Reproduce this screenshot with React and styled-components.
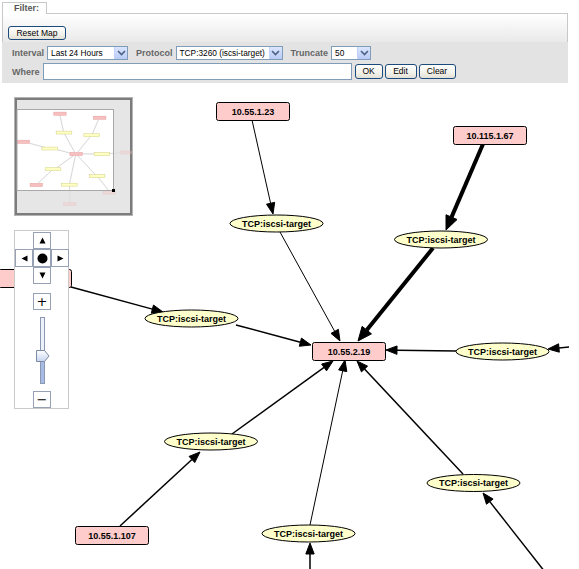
import React from 'react'
import styled, { createGlobalStyle } from 'styled-components'

const GlobalStyle = createGlobalStyle`
  body {
    margin: 0;
    background: #fff;
    font-family: "Liberation Sans", Arial, sans-serif;
  }
`

// graph data, in page coordinates; off = only visible in the overview
const hosts = [
  { label: '10.55.1.23', x: 216, y: 102 },
  { label: '10.115.1.67', x: 453, y: 126 },
  { label: '10.55.2.19', x: 312, y: 342 },
  { label: '10.55.1.107', x: 75, y: 526 },
  { label: '10.55.1.31', x: -2, y: 269 },
  { label: '10.55.1.44', x: 614, y: 333, off: true },
  { label: '10.55.1.58', x: 508, y: 572, off: true },
  { label: '10.55.1.62', x: 275, y: 640, off: true },
]

const services = [
  { x: 276.5, y: 223.5 },
  { x: 441, y: 239.5 },
  { x: 191.5, y: 318.5 },
  { x: 502.5, y: 351.5 },
  { x: 211, y: 441.5 },
  { x: 308.5, y: 533.5 },
  { x: 473.5, y: 483 },
]

const edges = [
  { from: [252, 120], to: [273, 214], w: 1 },
  { from: [280, 232], to: [340, 341], w: 1 },
  { from: [483, 144], to: [446, 230], w: 4 },
  { from: [433, 248], to: [358, 341], w: 4 },
  { from: [71, 287], to: [163, 312], w: 1.5 },
  { from: [236, 325], to: [311, 345], w: 1.5 },
  { from: [456, 351], to: [386, 350], w: 1.5 },
  { from: [614, 343], to: [548, 349], w: 1.5 },
  { from: [120, 526], to: [200, 452], w: 1.5 },
  { from: [232, 434], to: [333, 361], w: 1.5 },
  { from: [310, 525], to: [345, 360], w: 1 },
  { from: [310, 640], to: [310, 543], w: 1.5 },
  { from: [463, 474], to: [357, 361], w: 1.5 },
  { from: [545, 572], to: [483, 493], w: 1.5 },
]

const NODE_W = 73
const NODE_H = 18

const Page = styled.div`
  width: 579px;
`

const FilterBox = styled.div`
  width: 566px;
  padding: 2px 0 0 2px;
`

const Legend = styled.div`
  position: relative;
  z-index: 1;
  width: fit-content;
  box-sizing: border-box;
  height: 12px;
  margin-bottom: -1px;
  padding: 0 7px 0 11px;
  border: 1px solid #c8c8c8;
  border-bottom: none;
  background: #fff;
  color: #555;
  font-size: 9px;
  font-weight: bold;
  line-height: 11px;
`

const Panel = styled.div`
  box-sizing: border-box;
  height: 29px;
  padding: 12px 0 0 5px;
  border: 1px solid #c8c8c8;
  border-bottom: none;
  background: linear-gradient(#fff, #e9e9e9);
`

const Button = styled.button`
  display: block;
  box-sizing: border-box;
  height: ${(p) => p.$h || 15}px;
  width: ${(p) => p.$w}px;
  margin: 0 0 0 ${(p) => p.$ml || 0}px;
  padding: 0;
  border: 1px solid #1d4a7c;
  border-radius: 3px;
  background: linear-gradient(#fff, #f2f1ea 60%, #e3e1d6);
  color: #000;
  font-family: "Liberation Sans", Arial, sans-serif;
  font-size: 8.5px;
  line-height: 1;
`

const Controls = styled.div`
  box-sizing: border-box;
  height: 41px;
  padding: 4px 0 0 10px;
  background: #e3e3e3;
`

const Row = styled.div`
  display: flex;
  align-items: center;
  gap: 3px;
  height: ${(p) => p.$h}px;
  margin-bottom: 3px;
`

const Label = styled.span`
  margin-left: ${(p) => (p.$first ? 0 : 5)}px;
  color: #666;
  font-size: 9px;
  font-weight: bold;
`

const SelectBox = styled.div`
  display: flex;
  align-items: stretch;
  box-sizing: border-box;
  width: ${(p) => p.$w}px;
  height: 14px;
  border: 1px solid #7f9db9;
  background: #fff;
`

const SelectText = styled.span`
  flex: 1;
  padding-left: 3px;
  color: #000;
  font-size: 8.3px;
  line-height: 12px;
  white-space: nowrap;
  overflow: hidden;
`

const SelectArrow = styled.span`
  display: flex;
  align-items: center;
  justify-content: center;
  width: 12px;
  border-left: 1px solid #c3d3fd;
  background: linear-gradient(#dbe6fe, #b9cbf6);
`

const TextInput = styled.div`
  box-sizing: border-box;
  width: 309px;
  height: 17px;
  border: 1px solid #7f9db9;
  background: #fff;
`

const Canvas = styled.div`
  position: relative;
  height: 486px;
  overflow: hidden;
`

const GraphSvg = styled.svg`
  display: block;
`

const NodeText = styled.text`
  font-family: "Liberation Sans", Arial, sans-serif;
  font-size: 9px;
  font-weight: bold;
  fill: #000;
`

const Overview = styled.div`
  position: absolute;
  left: 14px;
  top: 14px;
  width: 119px;
  height: 119px;
  box-sizing: border-box;
  border: 1px solid #b4b4b4;
  background: #e6e6e6;
  box-shadow: inset 0 0 0 2px #7c7c7c;
`

const OverviewSvg = styled.svg`
  position: absolute;
  left: 0;
  top: 0;
`

const Nav = styled.div`
  position: absolute;
  left: 14px;
  top: 147px;
  width: 55px;
  height: 179px;
  box-sizing: border-box;
  border: 1px solid #cacaca;
  background: #fff;
`

const PanGrid = styled.div`
  display: grid;
  grid-template-columns: repeat(3, 18px);
  grid-template-rows: 17px 18px 17px;
  margin: 1px 0 0 0;
`

const NavButton = styled.div`
  grid-row: ${(p) => p.$row || 'auto'};
  grid-column: ${(p) => p.$col || 'auto'};
  display: flex;
  align-items: center;
  justify-content: center;
  box-sizing: border-box;
  width: 18px;
  height: ${(p) => p.$h || 17}px;
  border: 1px solid #97a1b5;
  background: #fff;
  color: #000;
  font-family: "DejaVu Sans", sans-serif;
  font-size: 13px;
  line-height: 1;
`

const ZoomColumn = styled.div`
  display: flex;
  flex-direction: column;
  align-items: center;
  width: 18px;
  margin: 9px 0 0 18px;
`

const Track = styled.div`
  position: relative;
  box-sizing: border-box;
  width: 5px;
  height: 67px;
  margin: 7px 0;
  border: 1px solid #8b98b2;
  background: linear-gradient(#edf1f9 0 36px, #a7bbe4 36px);
`

const Handle = styled.svg`
  position: absolute;
  left: -5px;
  top: 32px;
`

const Chevron = () => (
  <svg width="9" height="6" viewBox="0 0 9 6">
    <path d="M1 1 L4.5 4.5 L8 1" fill="none" stroke="#4d6185" strokeWidth="1.6" />
  </svg>
)

const Select = ({ w, children }) => (
  <SelectBox $w={w}>
    <SelectText>{children}</SelectText>
    <SelectArrow><Chevron /></SelectArrow>
  </SelectBox>
)

const arrowParts = (e) => {
  const [x1, y1] = e.from
  const [x2, y2] = e.to
  const dx = x2 - x1
  const dy = y2 - y1
  const len = Math.hypot(dx, dy)
  const ux = dx / len
  const uy = dy / len
  const L = e.w > 2 ? 14 : 11
  const W = e.w > 2 ? 6 : 4.2
  const bx = x2 - ux * L
  const by = y2 - uy * L
  const pts = [
    [x2, y2],
    [bx - uy * W, by + ux * W],
    [bx + uy * W, by - ux * W],
  ]
  return { bx, by, pts: pts.map((p) => p.join(',')).join(' ') }
}

const Graph = () => (
  <GraphSvg width="569" height="486" viewBox="0 83 569 486">
    {edges.map((e, i) => {
      const a = arrowParts(e)
      return (
        <g key={i}>
          <line x1={e.from[0]} y1={e.from[1]} x2={a.bx} y2={a.by} stroke="#000" strokeWidth={e.w} />
          <polygon points={a.pts} fill="#000" stroke="#000" strokeWidth="1" />
        </g>
      )
    })}
    {services.map((s, i) => (
      <g key={i}>
        <ellipse cx={s.x} cy={s.y} rx="46.5" ry="8.5" fill="#ffffcc" stroke="#000" strokeWidth="1" />
        <NodeText x={s.x} y={s.y + 3.2} textAnchor="middle">TCP:iscsi-target</NodeText>
      </g>
    ))}
    {hosts.filter((h) => !h.off).map((h) => (
      <g key={h.label}>
        <rect x={h.x + 0.5} y={h.y + 0.5} width={NODE_W} height={NODE_H} rx="2" fill="#ffcccc" stroke="#000" strokeWidth="1" />
        <NodeText x={h.x + NODE_W / 2 + 0.5} y={h.y + 12.6} textAnchor="middle">{h.label}</NodeText>
      </g>
    ))}
  </GraphSvg>
)

// mini map: page coords scaled into the overview box
const S = 0.168
const mx = (x) => 2.54 + x * S
const my = (y) => -2.97 + y * S

const MiniGraph = () => (
  <g>
    {edges.map((e, i) => (
      <line key={i} x1={mx(e.from[0])} y1={my(e.from[1])} x2={mx(e.to[0])} y2={my(e.to[1])} stroke="#c4c4c4" strokeWidth="0.6" />
    ))}
    {services.map((s, i) => (
      <rect key={i} x={mx(s.x - 46.5)} y={my(s.y - 8.5)} width={93 * S} height={17 * S} fill="#ffffc4" stroke="#d4d48c" strokeWidth="0.5" />
    ))}
    {hosts.map((h) => (
      <rect key={h.label} x={mx(h.x)} y={my(h.y)} width={NODE_W * S} height={NODE_H * S} fill="#f7c0c0" stroke="#e9a4a4" strokeWidth="0.5" />
    ))}
  </g>
)

const MiniMap = () => (
  <Overview>
    <OverviewSvg width="117" height="117" viewBox="0 0 117 117">
      <defs>
        <clipPath id="vp">
          <rect x="2" y="11" width="96" height="81" />
        </clipPath>
      </defs>
      <rect x="2" y="11" width="96" height="81" fill="#fff" />
      <g opacity="0.35"><MiniGraph /></g>
      <g clipPath="url(#vp)"><MiniGraph /></g>
      <rect x="2" y="11.5" width="96.5" height="81" fill="none" stroke="#a8a8a8" strokeWidth="1" />
      <rect x="97" y="91" width="3" height="3" fill="#000" />
    </OverviewSvg>
  </Overview>
)

const Tri = ({ dir }) => {
  const shapes = {
    up: '0.5,6.5 3.5,0.5 6.5,6.5',
    down: '0.5,0.5 3.5,6.5 6.5,0.5',
    left: '6.5,0.5 0.5,3.5 6.5,6.5',
    right: '0.5,0.5 6.5,3.5 0.5,6.5',
  }
  return (
    <svg width="7" height="7" viewBox="0 0 7 7">
      <polygon points={shapes[dir]} fill="#000" />
    </svg>
  )
}

const NavControl = () => (
  <Nav>
    <PanGrid>
      <NavButton $row={1} $col={2}><Tri dir="up" /></NavButton>
      <NavButton $row={2} $col={1} $h={18}><Tri dir="left" /></NavButton>
      <NavButton $row={2} $col={2} $h={18}>
        <svg width="11" height="11" viewBox="0 0 11 11"><circle cx="5.5" cy="5.5" r="5" fill="#000" /></svg>
      </NavButton>
      <NavButton $row={2} $col={3} $h={18}><Tri dir="right" /></NavButton>
      <NavButton $row={3} $col={2}><Tri dir="down" /></NavButton>
    </PanGrid>
    <ZoomColumn>
      <NavButton>+</NavButton>
      <Track>
        <Handle width="14" height="12" viewBox="0 0 14 12">
          <defs>
            <linearGradient id="hg" x1="0" y1="0" x2="0" y2="1">
              <stop offset="0" stopColor="#ffffff" />
              <stop offset="1" stopColor="#c6d5ef" />
            </linearGradient>
          </defs>
          <polygon points="0.5,0.5 8.5,0.5 13,6 8.5,11.5 0.5,11.5" fill="url(#hg)" stroke="#7d8aa6" strokeWidth="1" />
        </Handle>
      </Track>
      <NavButton>−</NavButton>
    </ZoomColumn>
  </Nav>
)

const App = () => (
  <Page>
    <GlobalStyle />
    <FilterBox>
      <Legend>Filter:</Legend>
      <Panel>
        <Button $w={58} $h={14}>Reset Map</Button>
      </Panel>
      <Controls>
        <Row $h={14}>
          <Label $first>Interval</Label>
          <Select w={81}>Last 24 Hours</Select>
          <Label>Protocol</Label>
          <Select w={107}>TCP:3260 (iscsi-target)</Select>
          <Label>Truncate</Label>
          <Select w={40}>50</Select>
        </Row>
        <Row $h={17}>
          <Label $first>Where</Label>
          <TextInput />
          <Button $w={28}>OK</Button>
          <Button $w={32} $ml={-1}>Edit</Button>
          <Button $w={37} $ml={-1}>Clear</Button>
        </Row>
      </Controls>
    </FilterBox>
    <Canvas>
      <Graph />
      <MiniMap />
      <NavControl />
    </Canvas>
  </Page>
)

export default App
